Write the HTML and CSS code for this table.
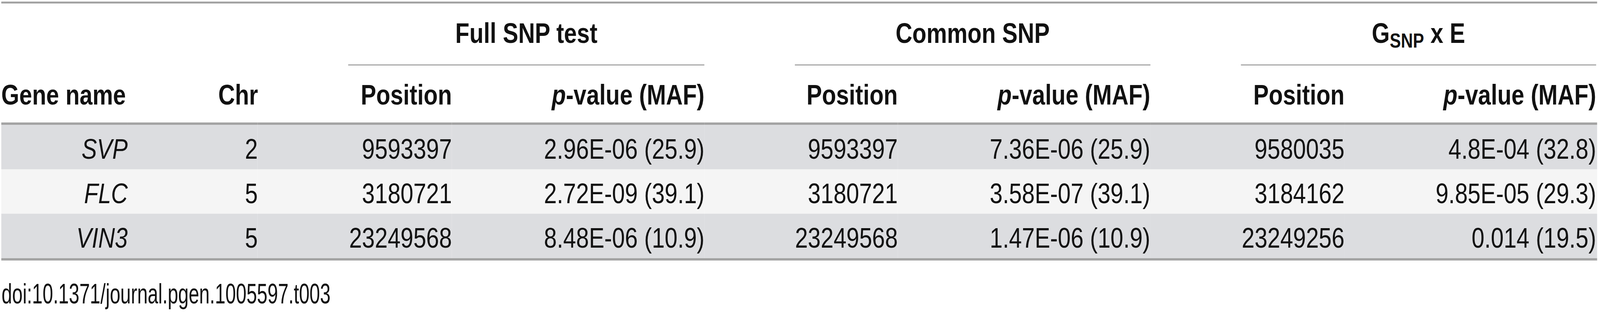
FILE: index.html
```html
<!DOCTYPE html>
<html lang="en">
<head>
<meta charset="utf-8">
<title>Table 3</title>
<link rel="stylesheet" href="styles.css">
</head>
<body>
<div class="wrap">
  <table class="snp">
    <colgroup>
      <col class="c-gene">
      <col class="c-chr">
      <col class="c-pos">
      <col class="c-pval">
      <col class="c-pos2">
      <col class="c-pval">
      <col class="c-pos">
      <col class="c-pval">
    </colgroup>
    <thead>
      <tr class="group-row">
        <th colspan="2"></th>
        <th colspan="2" class="group"><div class="group-label">Full SNP test</div></th>
        <th colspan="2" class="group"><div class="group-label">Common SNP</div></th>
        <th colspan="2" class="group last"><div class="group-label">G<sub>SNP</sub> x E</div></th>
      </tr>
      <tr class="head-row">
        <th class="left first">Gene name</th>
        <th>Chr</th>
        <th>Position</th>
        <th><i>p</i>-value (MAF)</th>
        <th>Position</th>
        <th><i>p</i>-value (MAF)</th>
        <th>Position</th>
        <th class="last"><i>p</i>-value (MAF)</th>
      </tr>
    </thead>
    <tbody>
      <tr class="odd">
        <td class="first"><i>SVP</i></td>
        <td>2</td>
        <td>9593397</td>
        <td>2.96E-06 (25.9)</td>
        <td>9593397</td>
        <td>7.36E-06 (25.9)</td>
        <td>9580035</td>
        <td class="last">4.8E-04 (32.8)</td>
      </tr>
      <tr class="even">
        <td class="first"><i>FLC</i></td>
        <td>5</td>
        <td>3180721</td>
        <td>2.72E-09 (39.1)</td>
        <td>3180721</td>
        <td>3.58E-07 (39.1)</td>
        <td>3184162</td>
        <td class="last">9.85E-05 (29.3)</td>
      </tr>
      <tr class="odd">
        <td class="first"><i>VIN3</i></td>
        <td>5</td>
        <td>23249568</td>
        <td>8.48E-06 (10.9)</td>
        <td>23249568</td>
        <td>1.47E-06 (10.9)</td>
        <td>23249256</td>
        <td class="last">0.014 (19.5)</td>
      </tr>
    </tbody>
  </table>
  <p class="doi"><span class="doi-text">doi:10.1371/journal.pgen.1005597.t003</span></p>
</div>
</body>
</html>
```
FILE: styles.css
```css
html, body {
  margin: 0;
  padding: 0;
  background: #ffffff;
}

body {
  font-family: "Liberation Sans", Arial, Helvetica, sans-serif;
  font-size: 72px;
  color: #111111;
  overflow: hidden;
}

.wrap {
  width: 4973px;
  padding: 4px 0 0 4px;
  transform-origin: 0 0;
}

@media (max-width: 4500px) {
  .wrap {
    transform: scaleX(0.8215);
  }
}

.snp {
  width: 4973px;
  table-layout: fixed;
  border-collapse: separate;
  border-spacing: 0;
  border-top: 5px solid #a4a4a4;
  border-bottom: 6px solid #a4a4a4;
}

.c-gene { width: 394px; }
.c-chr  { width: 405px; }
.c-pos  { width: 605px; }
.c-pos2 { width: 602px; }
.c-pval { width: 787px; }

.snp th,
.snp td {
  line-height: 83px;
  padding: 0 0 0 282px;
  text-align: right;
  white-space: nowrap;
  font-weight: normal;
}

.snp th {
  font-weight: bold;
}

.snp .first {
  padding-left: 0;
}

.snp .last {
  padding-right: 3px;
}

.group-row th {
  padding-top: 35px;
  padding-bottom: 0;
}

.group-row th.group {
  text-align: center;
}

.group-label {
  padding-bottom: 38px;
  border-bottom: 3px solid #a8a8a8;
}

.group-label sub {
  font-size: 52px;
  line-height: 0;
  vertical-align: -12px;
}

.head-row th {
  padding-top: 34px;
  padding-bottom: 29px;
  border-bottom: 6px solid #a4a4a4;
}

.head-row th.left {
  text-align: left;
}

.snp td {
  padding-top: 21px;
  padding-bottom: 10px;
}

.snp td.first {
  padding-left: 0;
}

tr.odd td {
  background: #dcdde0;
}

tr.even td {
  background: #f5f5f5;
}

.doi {
  margin: 44px 0 0 1px;
  line-height: 83px;
  font-size: 72px;
  color: #111111;
}

.doi-text {
  display: inline-block;
  transform: scaleX(0.818);
  transform-origin: 0 50%;
}
```
